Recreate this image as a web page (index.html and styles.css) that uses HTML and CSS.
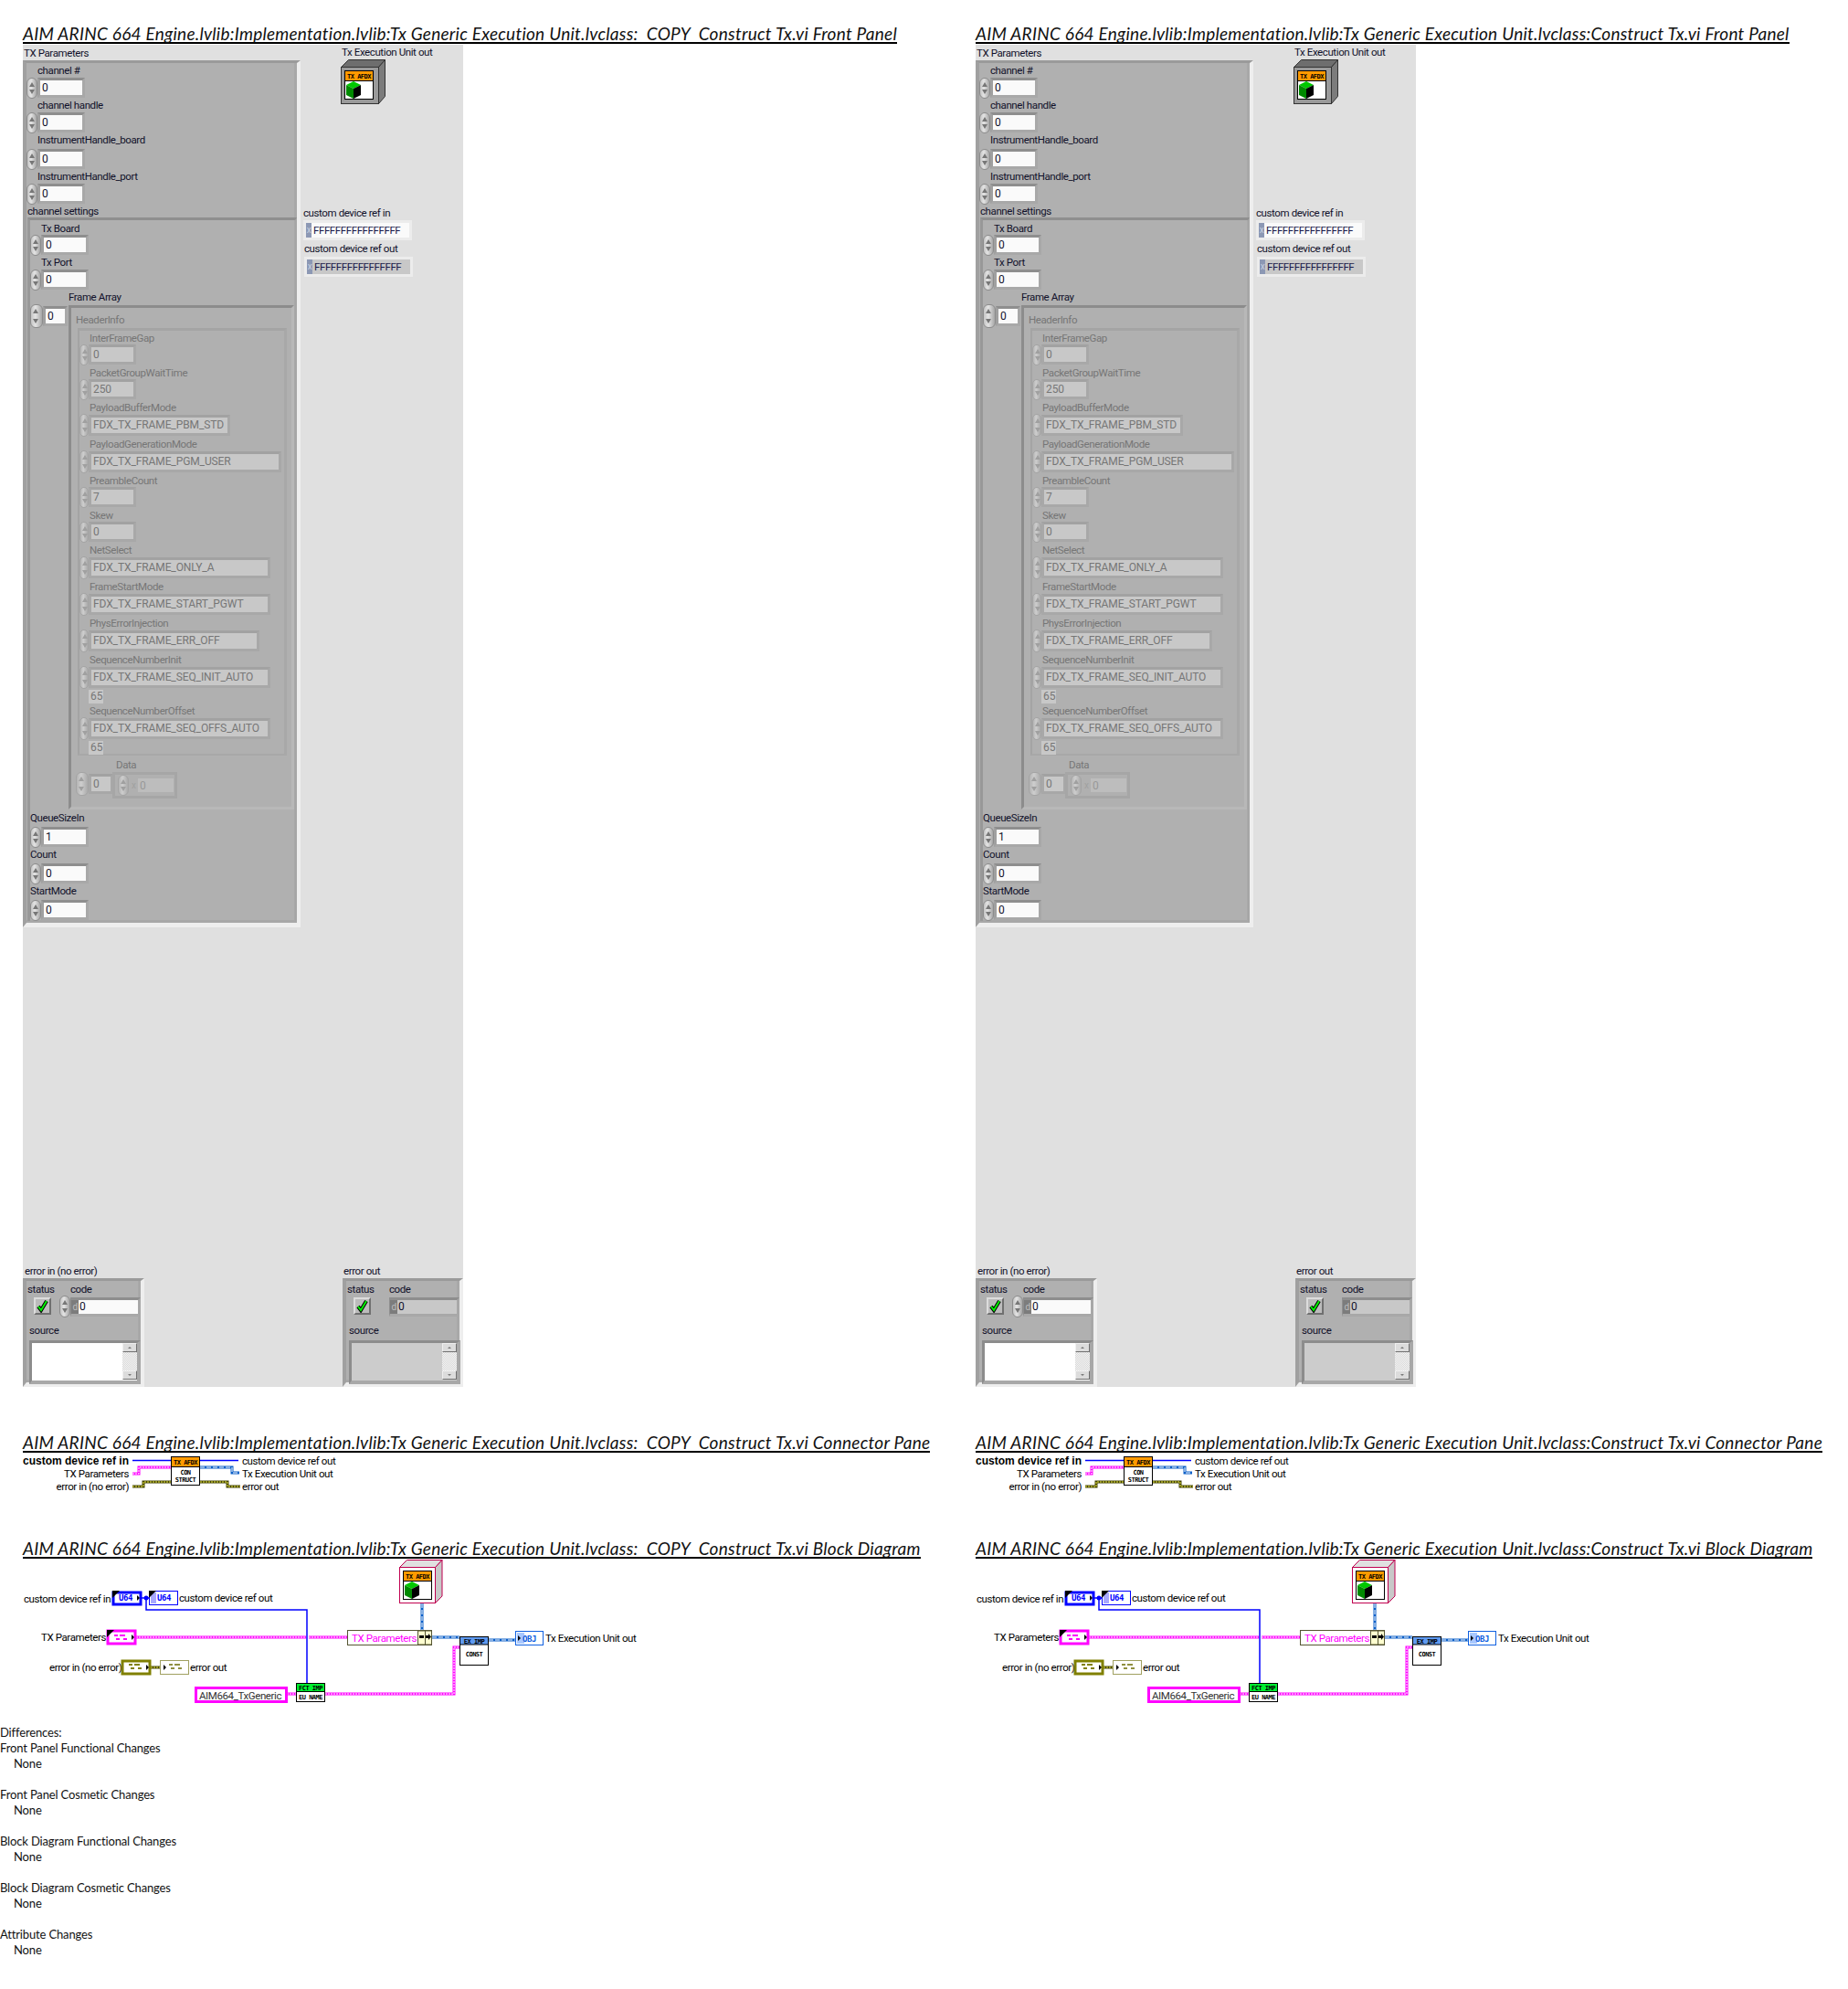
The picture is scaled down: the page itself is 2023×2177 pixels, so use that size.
FILE: index.html
```html
<!DOCTYPE html>
<html lang="en">
<head>
    <meta charset="UTF-8">
    <title>VI Comparison Report</title>
    <link rel="stylesheet" href="styles.css">
</head>
<body>
    <svg class="sprite" width="0" height="0">
        <symbol id="check" viewBox="0 0 13 15"><path d="M2 8 L5 12 L11 2" fill="none" stroke="#000" stroke-width="4"/><path d="M2 8 L5 12 L11 2" fill="none" stroke="#00f000" stroke-width="2"/></symbol>
        <symbol id="cube" viewBox="0 0 20 20"><path d="M10 0 18 4 10 8 2 4Z" fill="#00c800"/><path d="M2 4 10 8 10 19 2 15Z" fill="#008a00"/><path d="M10 8 18 4 18 15 10 19Z" fill="#000"/></symbol>
    </svg>

    <div class="columns">
        <div class="column">
            <h2>AIM ARINC 664 Engine.lvlib:Implementation.lvlib:Tx Generic Execution Unit.lvclass:  COPY  Construct Tx.vi Front Panel</h2>
            <div class="panel">
                <p class="lbl tx-label">TX Parameters</p>
                <div class="cluster tx-cluster">
                    <div class="ctl"><p>channel #</p><div class="num"><i class="spin"></i><span class="val">0</span></div></div>
                    <div class="ctl"><p>channel handle</p><div class="num"><i class="spin"></i><span class="val">0</span></div></div>
                    <div class="ctl"><p class="tall">InstrumentHandle_board</p><div class="num"><i class="spin"></i><span class="val">0</span></div></div>
                    <div class="ctl"><p>InstrumentHandle_port</p><div class="num"><i class="spin"></i><span class="val">0</span></div></div>
                    <p class="lbl settings-label">channel settings</p>
                    <div class="settings">
                        <div class="ctl"><p>Tx Board</p><div class="num"><i class="spin"></i><span class="val">0</span></div></div>
                        <div class="ctl"><p>Tx Port</p><div class="num"><i class="spin"></i><span class="val">0</span></div></div>
                        <p class="lbl array-label">Frame Array</p>
                        <div class="array">
                            <div class="num index"><i class="spin big"></i><span class="val short">0</span></div>
                            <div class="array-frame off">
                                <p class="lbl header-label">HeaderInfo</p>
                                <div class="header-info">
                                    <div class="ctl"><p>InterFrameGap</p><div class="num"><i class="spin"></i><span class="val">0</span></div></div>
                                    <div class="ctl"><p>PacketGroupWaitTime</p><div class="num"><i class="spin"></i><span class="val">250</span></div></div>
                                    <div class="ctl"><p>PayloadBufferMode</p><div class="num enum"><i class="spin"></i><span class="val w150">FDX_TX_FRAME_PBM_STD</span></div></div>
                                    <div class="ctl"><p>PayloadGenerationMode</p><div class="num enum"><i class="spin"></i><span class="val w206">FDX_TX_FRAME_PGM_USER</span></div></div>
                                    <div class="ctl"><p>PreambleCount</p><div class="num"><i class="spin"></i><span class="val">7</span></div></div>
                                    <div class="ctl"><p>Skew</p><div class="num"><i class="spin"></i><span class="val">0</span></div></div>
                                    <div class="ctl"><p>NetSelect</p><div class="num enum"><i class="spin"></i><span class="val w194">FDX_TX_FRAME_ONLY_A</span></div></div>
                                    <div class="ctl"><p>FrameStartMode</p><div class="num enum"><i class="spin"></i><span class="val w194">FDX_TX_FRAME_START_PGWT</span></div></div>
                                    <div class="ctl"><p>PhysErrorInjection</p><div class="num enum"><i class="spin"></i><span class="val w182">FDX_TX_FRAME_ERR_OFF</span></div></div>
                                    <div class="ctl"><p>SequenceNumberInit</p><div class="num enum"><i class="spin"></i><span class="val w194">FDX_TX_FRAME_SEQ_INIT_AUTO</span></div></div>
                                    <span class="small-val">65</span>
                                    <div class="ctl"><p>SequenceNumberOffset</p><div class="num enum"><i class="spin"></i><span class="val w194">FDX_TX_FRAME_SEQ_OFFS_AUTO</span></div></div>
                                    <span class="small-val">65</span>
                                </div>
                                <div class="data-row">
                                    <div class="num data-index"><i class="spin big"></i><span class="val short">0</span></div>
                                    <div class="data">
                                        <p class="lbl">Data</p>
                                        <div class="data-frame"><i class="spin"></i><em>x</em><span class="val data-val">0</span></div>
                                    </div>
                                </div>
                            </div>
                        </div>
                        <div class="ctl flush"><p>QueueSizeIn</p><div class="num"><i class="spin"></i><span class="val">1</span></div></div>
                        <div class="ctl flush"><p>Count</p><div class="num"><i class="spin"></i><span class="val">0</span></div></div>
                        <div class="ctl flush"><p>StartMode</p><div class="num"><i class="spin"></i><span class="val">0</span></div></div>
                    </div>
                </div>

                <p class="lbl unit-label">Tx Execution Unit out</p>
                <svg class="unit-icon" viewBox="373 65 49 49">
                    <path d="M373.5 73.5 381.5 65.5H421.5L414.5 73.5Z" fill="#6e6e6e" stroke="#333"/>
                    <path d="M414.5 73.5 421.5 65.5V105.5L414.5 113.5Z" fill="#7c7c7c" stroke="#333"/>
                    <rect x="373.5" y="73.5" width="41" height="40" fill="#9a9a9a" stroke="#333"/>
                    <rect x="377.5" y="77.5" width="31" height="31" fill="#fff" stroke="#000"/>
                    <rect x="378" y="78" width="30" height="10" fill="#ff9a00"/>
                    <line x1="378" y1="88.5" x2="408" y2="88.5" stroke="#000"/>
                    <text class="tiny" x="393" y="86" text-anchor="middle">TX AFDX</text>
                    <use href="#cube" x="377" y="89" width="20" height="20"/>
                </svg>

                <div class="ref ref-in">
                    <p class="lbl">custom device ref in</p>
                    <div class="ref-frame"><em>x</em><span>FFFFFFFFFFFFFFFF</span></div>
                </div>
                <div class="ref ref-out">
                    <p class="lbl">custom device ref out</p>
                    <div class="ref-frame grey"><em>x</em><span>FFFFFFFFFFFFFFFF</span></div>
                </div>

                <div class="err err-in">
                    <p class="lbl">error in (no error)</p>
                    <div class="cluster err-box">
                        <div class="err-top">
                            <div class="status"><p class="lbl">status</p><div class="check"><svg width="13" height="15"><use href="#check"/></svg></div></div>
                            <i class="spin err-spin"></i>
                            <div class="code"><p class="lbl">code</p><div class="code-frame"><em>d</em><span>0</span></div></div>
                        </div>
                        <p class="lbl source-label">source</p>
                        <div class="source"><div class="scroll"><b></b><b class="down"></b></div></div>
                    </div>
                </div>
                <div class="err err-out">
                    <p class="lbl">error out</p>
                    <div class="cluster err-box">
                        <div class="err-top">
                            <div class="status"><p class="lbl">status</p><div class="check"><svg width="13" height="15"><use href="#check"/></svg></div></div>
                            <div class="code"><p class="lbl">code</p><div class="code-frame grey"><em>d</em><span>0</span></div></div>
                        </div>
                        <p class="lbl source-label">source</p>
                        <div class="source grey"><div class="scroll"><b></b><b class="down"></b></div></div>
                    </div>
                </div>
            </div>

            <h2 class="conn-title">AIM ARINC 664 Engine.lvlib:Implementation.lvlib:Tx Generic Execution Unit.lvclass:  COPY  Construct Tx.vi Connector Pane</h2>
            <svg class="conn" viewBox="25 1590 400 95">
                <text class="bold" x="141" y="1603" text-anchor="end">custom device ref in</text>
                <text x="141" y="1617" text-anchor="end">TX Parameters</text>
                <text x="141" y="1631" text-anchor="end">error in (no error)</text>
                <path class="bl" d="M145 1598.5H187M219 1598.5H261"/>
                <path class="pk" d="M145 1613H152V1606H187"/><path class="pk-in" d="M145 1613H152V1606H187"/>
                <path class="ol" d="M145 1627H157V1622H187M219 1622H249V1627H263"/><path class="ol-in" d="M145 1627H157V1622H187M219 1622H249V1627H263"/>
                <path class="cw" d="M219 1606H254V1612H262"/><path class="cw-in" d="M219 1606H254V1612H262"/>
                <rect x="187.5" y="1594.5" width="31" height="31" fill="#fff" stroke="#000"/>
                <rect x="188" y="1595" width="30" height="10" fill="#ff9a00"/>
                <line x1="188" y1="1605.5" x2="218" y2="1605.5" stroke="#000"/>
                <text class="tiny" x="203" y="1603" text-anchor="middle">TX AFDX</text>
                <text class="tiny" x="203" y="1614" text-anchor="middle">CON</text>
                <text class="tiny" x="203" y="1622" text-anchor="middle">STRUCT</text>
                <text x="265" y="1603">custom device ref out</text>
                <text x="265" y="1617">Tx Execution Unit out</text>
                <text x="265" y="1631">error out</text>
            </svg>

            <h2>AIM ARINC 664 Engine.lvlib:Implementation.lvlib:Tx Generic Execution Unit.lvclass:  COPY  Construct Tx.vi Block Diagram</h2>
            <svg class="diagram" viewBox="25 1706 760 174">
                <text x="26" y="1754">custom device ref in</text>
                <rect x="124" y="1743" width="30" height="13" fill="#fff" stroke="#0000ff" stroke-width="3"/>
                <path d="M123 1741H131L123 1749Z"/>
                <text class="term" x="130" y="1752" fill="#0000ff">U64</text>
                <path d="M150 1746 153 1749 150 1752Z"/>
                <path class="bl" d="M155 1749H163M160 1749V1762H336V1842"/>
                <circle cx="160" cy="1749" r="2.5" fill="#0000ff"/>
                <rect x="163.5" y="1741.5" width="31" height="15" fill="#fff" stroke="#0000ff"/>
                <rect x="165" y="1743" width="6" height="12" fill="#a8a8ff"/>
                <path d="M163 1741H171L163 1749Z"/>
                <text class="term" x="172" y="1752" fill="#0000ff">U64</text>
                <text x="196" y="1753">custom device ref out</text>

                <text x="45" y="1796">TX Parameters</text>
                <path class="pk" d="M149 1792H335M338 1792H380"/><path class="pk-in" d="M149 1792H335M338 1792H380"/>
                <rect x="118" y="1785" width="30" height="14" fill="#fff" stroke="#ff00ff" stroke-width="3"/>
                <path d="M117 1784H125L117 1792Z"/>
                <path d="M125 1789h4v2h-4zM131 1789h6v2h-6zM127 1793h4v2h-4zM135 1793h4v2h-4z" fill="#ff00ff"/>
                <path d="M144 1789 147 1792 144 1795Z"/>

                <text x="54" y="1829">error in (no error)</text>
                <path class="ol" d="M165 1825H175"/><path class="ol-in" d="M165 1825H175"/>
                <rect x="134" y="1818" width="30" height="14" fill="#fff" stroke="#808000" stroke-width="3"/>
                <path d="M141 1821h4v2h-4zM147 1821h6v2h-6zM143 1825h4v2h-4zM151 1825h4v2h-4z" fill="#808000"/>
                <path d="M160 1822 163 1825 160 1828Z"/>
                <rect x="175.5" y="1817.5" width="31" height="15" fill="#fff" stroke="#a0a060"/>
                <path d="M185 1821h4v2h-4zM191 1821h6v2h-6zM187 1825h4v2h-4zM195 1825h4v2h-4z" fill="#909040"/>
                <path d="M179 1822 182 1825 179 1828Z"/>
                <text x="208" y="1829">error out</text>

                <path class="pk" d="M314 1854H324M356 1854H497V1803H503"/><path class="pk-in" d="M314 1854H324M356 1854H497V1803H503"/>
                <rect x="214.5" y="1847.5" width="99" height="15" fill="#fff" stroke="#ff00ff" stroke-width="3"/>
                <text x="218" y="1860" fill="#333">AIM664_TxGeneric</text>
                <rect x="324.5" y="1842.5" width="31" height="20" fill="#fff" stroke="#000"/>
                <rect x="325" y="1843" width="30" height="8" fill="#00f030"/>
                <line x1="325" y1="1851.5" x2="355" y2="1851.5" stroke="#000"/>
                <text class="tiny" x="340" y="1850" text-anchor="middle">FCT IMP</text>
                <text class="tiny" x="340" y="1860" text-anchor="middle">EU NAME</text>

                <path d="M437.5 1715.5 445.5 1707.5H484L476.5 1715.5Z" fill="#e0e0e0" stroke="#c00050"/>
                <path d="M476.5 1715.5 484 1707.5V1747L476.5 1754.5Z" fill="#c8c8c8" stroke="#c00050"/>
                <rect x="437.5" y="1715.5" width="39" height="39" fill="#fff" stroke="#c00050"/>
                <rect x="441.5" y="1719.5" width="31" height="31" fill="#fff" stroke="#000"/>
                <rect x="442" y="1720" width="30" height="10" fill="#ff9a00"/>
                <line x1="442" y1="1730.5" x2="472" y2="1730.5" stroke="#000"/>
                <text class="tiny" x="457" y="1728" text-anchor="middle">TX AFDX</text>
                <use href="#cube" x="441" y="1731" width="20" height="20"/>

                <path class="cw" d="M462 1755V1784M473 1792H503M535 1795H564"/><path class="cw-in" d="M462 1755V1784M473 1792H503M535 1795H564"/>
                <rect x="380.5" y="1784.5" width="92" height="16" fill="#fff" stroke="#555533"/>
                <rect x="457.5" y="1785" width="15" height="15" fill="#ffffd0" stroke="#555533"/>
                <line x1="465.5" y1="1785" x2="465.5" y2="1800" stroke="#555533"/>
                <path d="M459 1790h5v3h-5zM466 1790h3v-2l3 3.500-3 3.500v-2h-3z"/>
                <text x="385" y="1797" class="pink-text">TX Parameters</text>

                <rect x="503.5" y="1791.500" width="31" height="31" fill="#fff" stroke="#000"/>
                <rect x="504" y="1792" width="30" height="8" fill="#5f9af0"/>
                <line x1="504" y1="1800" x2="534" y2="1800" stroke="#000"/>
                <text class="tiny" x="519" y="1799" text-anchor="middle">EX IMP</text>
                <text class="tiny" x="519" y="1813" text-anchor="middle">CONST</text>

                <rect x="564.5" y="1785.500" width="30" height="15" fill="#fff" stroke="#1060e0"/>
                <rect x="566" y="1787" width="8" height="12" fill="#a8c8ff"/>
                <path d="M567 1790 570 1793 567 1796Z"/>
                <text class="term" x="572" y="1797" fill="#1060e0">OBJ</text>
                <text x="597" y="1797">Tx Execution Unit out</text>
            </svg>
        </div>

        <div class="column">
            <h2>AIM ARINC 664 Engine.lvlib:Implementation.lvlib:Tx Generic Execution Unit.lvclass:Construct Tx.vi Front Panel</h2>
            <div class="panel">
                <p class="lbl tx-label">TX Parameters</p>
                <div class="cluster tx-cluster">
                    <div class="ctl"><p>channel #</p><div class="num"><i class="spin"></i><span class="val">0</span></div></div>
                    <div class="ctl"><p>channel handle</p><div class="num"><i class="spin"></i><span class="val">0</span></div></div>
                    <div class="ctl"><p class="tall">InstrumentHandle_board</p><div class="num"><i class="spin"></i><span class="val">0</span></div></div>
                    <div class="ctl"><p>InstrumentHandle_port</p><div class="num"><i class="spin"></i><span class="val">0</span></div></div>
                    <p class="lbl settings-label">channel settings</p>
                    <div class="settings">
                        <div class="ctl"><p>Tx Board</p><div class="num"><i class="spin"></i><span class="val">0</span></div></div>
                        <div class="ctl"><p>Tx Port</p><div class="num"><i class="spin"></i><span class="val">0</span></div></div>
                        <p class="lbl array-label">Frame Array</p>
                        <div class="array">
                            <div class="num index"><i class="spin big"></i><span class="val short">0</span></div>
                            <div class="array-frame off">
                                <p class="lbl header-label">HeaderInfo</p>
                                <div class="header-info">
                                    <div class="ctl"><p>InterFrameGap</p><div class="num"><i class="spin"></i><span class="val">0</span></div></div>
                                    <div class="ctl"><p>PacketGroupWaitTime</p><div class="num"><i class="spin"></i><span class="val">250</span></div></div>
                                    <div class="ctl"><p>PayloadBufferMode</p><div class="num enum"><i class="spin"></i><span class="val w150">FDX_TX_FRAME_PBM_STD</span></div></div>
                                    <div class="ctl"><p>PayloadGenerationMode</p><div class="num enum"><i class="spin"></i><span class="val w206">FDX_TX_FRAME_PGM_USER</span></div></div>
                                    <div class="ctl"><p>PreambleCount</p><div class="num"><i class="spin"></i><span class="val">7</span></div></div>
                                    <div class="ctl"><p>Skew</p><div class="num"><i class="spin"></i><span class="val">0</span></div></div>
                                    <div class="ctl"><p>NetSelect</p><div class="num enum"><i class="spin"></i><span class="val w194">FDX_TX_FRAME_ONLY_A</span></div></div>
                                    <div class="ctl"><p>FrameStartMode</p><div class="num enum"><i class="spin"></i><span class="val w194">FDX_TX_FRAME_START_PGWT</span></div></div>
                                    <div class="ctl"><p>PhysErrorInjection</p><div class="num enum"><i class="spin"></i><span class="val w182">FDX_TX_FRAME_ERR_OFF</span></div></div>
                                    <div class="ctl"><p>SequenceNumberInit</p><div class="num enum"><i class="spin"></i><span class="val w194">FDX_TX_FRAME_SEQ_INIT_AUTO</span></div></div>
                                    <span class="small-val">65</span>
                                    <div class="ctl"><p>SequenceNumberOffset</p><div class="num enum"><i class="spin"></i><span class="val w194">FDX_TX_FRAME_SEQ_OFFS_AUTO</span></div></div>
                                    <span class="small-val">65</span>
                                </div>
                                <div class="data-row">
                                    <div class="num data-index"><i class="spin big"></i><span class="val short">0</span></div>
                                    <div class="data">
                                        <p class="lbl">Data</p>
                                        <div class="data-frame"><i class="spin"></i><em>x</em><span class="val data-val">0</span></div>
                                    </div>
                                </div>
                            </div>
                        </div>
                        <div class="ctl flush"><p>QueueSizeIn</p><div class="num"><i class="spin"></i><span class="val">1</span></div></div>
                        <div class="ctl flush"><p>Count</p><div class="num"><i class="spin"></i><span class="val">0</span></div></div>
                        <div class="ctl flush"><p>StartMode</p><div class="num"><i class="spin"></i><span class="val">0</span></div></div>
                    </div>
                </div>

                <p class="lbl unit-label">Tx Execution Unit out</p>
                <svg class="unit-icon" viewBox="373 65 49 49">
                    <path d="M373.5 73.5 381.5 65.5H421.5L414.5 73.5Z" fill="#6e6e6e" stroke="#333"/>
                    <path d="M414.5 73.5 421.5 65.5V105.5L414.5 113.5Z" fill="#7c7c7c" stroke="#333"/>
                    <rect x="373.5" y="73.5" width="41" height="40" fill="#9a9a9a" stroke="#333"/>
                    <rect x="377.5" y="77.5" width="31" height="31" fill="#fff" stroke="#000"/>
                    <rect x="378" y="78" width="30" height="10" fill="#ff9a00"/>
                    <line x1="378" y1="88.5" x2="408" y2="88.5" stroke="#000"/>
                    <text class="tiny" x="393" y="86" text-anchor="middle">TX AFDX</text>
                    <use href="#cube" x="377" y="89" width="20" height="20"/>
                </svg>

                <div class="ref ref-in">
                    <p class="lbl">custom device ref in</p>
                    <div class="ref-frame"><em>x</em><span>FFFFFFFFFFFFFFFF</span></div>
                </div>
                <div class="ref ref-out">
                    <p class="lbl">custom device ref out</p>
                    <div class="ref-frame grey"><em>x</em><span>FFFFFFFFFFFFFFFF</span></div>
                </div>

                <div class="err err-in">
                    <p class="lbl">error in (no error)</p>
                    <div class="cluster err-box">
                        <div class="err-top">
                            <div class="status"><p class="lbl">status</p><div class="check"><svg width="13" height="15"><use href="#check"/></svg></div></div>
                            <i class="spin err-spin"></i>
                            <div class="code"><p class="lbl">code</p><div class="code-frame"><em>d</em><span>0</span></div></div>
                        </div>
                        <p class="lbl source-label">source</p>
                        <div class="source"><div class="scroll"><b></b><b class="down"></b></div></div>
                    </div>
                </div>
                <div class="err err-out">
                    <p class="lbl">error out</p>
                    <div class="cluster err-box">
                        <div class="err-top">
                            <div class="status"><p class="lbl">status</p><div class="check"><svg width="13" height="15"><use href="#check"/></svg></div></div>
                            <div class="code"><p class="lbl">code</p><div class="code-frame grey"><em>d</em><span>0</span></div></div>
                        </div>
                        <p class="lbl source-label">source</p>
                        <div class="source grey"><div class="scroll"><b></b><b class="down"></b></div></div>
                    </div>
                </div>
            </div>

            <h2 class="conn-title">AIM ARINC 664 Engine.lvlib:Implementation.lvlib:Tx Generic Execution Unit.lvclass:Construct Tx.vi Connector Pane</h2>
            <svg class="conn" viewBox="25 1590 400 95">
                <text class="bold" x="141" y="1603" text-anchor="end">custom device ref in</text>
                <text x="141" y="1617" text-anchor="end">TX Parameters</text>
                <text x="141" y="1631" text-anchor="end">error in (no error)</text>
                <path class="bl" d="M145 1598.5H187M219 1598.5H261"/>
                <path class="pk" d="M145 1613H152V1606H187"/><path class="pk-in" d="M145 1613H152V1606H187"/>
                <path class="ol" d="M145 1627H157V1622H187M219 1622H249V1627H263"/><path class="ol-in" d="M145 1627H157V1622H187M219 1622H249V1627H263"/>
                <path class="cw" d="M219 1606H254V1612H262"/><path class="cw-in" d="M219 1606H254V1612H262"/>
                <rect x="187.5" y="1594.5" width="31" height="31" fill="#fff" stroke="#000"/>
                <rect x="188" y="1595" width="30" height="10" fill="#ff9a00"/>
                <line x1="188" y1="1605.5" x2="218" y2="1605.5" stroke="#000"/>
                <text class="tiny" x="203" y="1603" text-anchor="middle">TX AFDX</text>
                <text class="tiny" x="203" y="1614" text-anchor="middle">CON</text>
                <text class="tiny" x="203" y="1622" text-anchor="middle">STRUCT</text>
                <text x="265" y="1603">custom device ref out</text>
                <text x="265" y="1617">Tx Execution Unit out</text>
                <text x="265" y="1631">error out</text>
            </svg>

            <h2>AIM ARINC 664 Engine.lvlib:Implementation.lvlib:Tx Generic Execution Unit.lvclass:Construct Tx.vi Block Diagram</h2>
            <svg class="diagram" viewBox="25 1706 760 174">
                <text x="26" y="1754">custom device ref in</text>
                <rect x="124" y="1743" width="30" height="13" fill="#fff" stroke="#0000ff" stroke-width="3"/>
                <path d="M123 1741H131L123 1749Z"/>
                <text class="term" x="130" y="1752" fill="#0000ff">U64</text>
                <path d="M150 1746 153 1749 150 1752Z"/>
                <path class="bl" d="M155 1749H163M160 1749V1762H336V1842"/>
                <circle cx="160" cy="1749" r="2.5" fill="#0000ff"/>
                <rect x="163.5" y="1741.5" width="31" height="15" fill="#fff" stroke="#0000ff"/>
                <rect x="165" y="1743" width="6" height="12" fill="#a8a8ff"/>
                <path d="M163 1741H171L163 1749Z"/>
                <text class="term" x="172" y="1752" fill="#0000ff">U64</text>
                <text x="196" y="1753">custom device ref out</text>

                <text x="45" y="1796">TX Parameters</text>
                <path class="pk" d="M149 1792H335M338 1792H380"/><path class="pk-in" d="M149 1792H335M338 1792H380"/>
                <rect x="118" y="1785" width="30" height="14" fill="#fff" stroke="#ff00ff" stroke-width="3"/>
                <path d="M117 1784H125L117 1792Z"/>
                <path d="M125 1789h4v2h-4zM131 1789h6v2h-6zM127 1793h4v2h-4zM135 1793h4v2h-4z" fill="#ff00ff"/>
                <path d="M144 1789 147 1792 144 1795Z"/>

                <text x="54" y="1829">error in (no error)</text>
                <path class="ol" d="M165 1825H175"/><path class="ol-in" d="M165 1825H175"/>
                <rect x="134" y="1818" width="30" height="14" fill="#fff" stroke="#808000" stroke-width="3"/>
                <path d="M141 1821h4v2h-4zM147 1821h6v2h-6zM143 1825h4v2h-4zM151 1825h4v2h-4z" fill="#808000"/>
                <path d="M160 1822 163 1825 160 1828Z"/>
                <rect x="175.5" y="1817.5" width="31" height="15" fill="#fff" stroke="#a0a060"/>
                <path d="M185 1821h4v2h-4zM191 1821h6v2h-6zM187 1825h4v2h-4zM195 1825h4v2h-4z" fill="#909040"/>
                <path d="M179 1822 182 1825 179 1828Z"/>
                <text x="208" y="1829">error out</text>

                <path class="pk" d="M314 1854H324M356 1854H497V1803H503"/><path class="pk-in" d="M314 1854H324M356 1854H497V1803H503"/>
                <rect x="214.5" y="1847.5" width="99" height="15" fill="#fff" stroke="#ff00ff" stroke-width="3"/>
                <text x="218" y="1860" fill="#333">AIM664_TxGeneric</text>
                <rect x="324.5" y="1842.5" width="31" height="20" fill="#fff" stroke="#000"/>
                <rect x="325" y="1843" width="30" height="8" fill="#00f030"/>
                <line x1="325" y1="1851.5" x2="355" y2="1851.5" stroke="#000"/>
                <text class="tiny" x="340" y="1850" text-anchor="middle">FCT IMP</text>
                <text class="tiny" x="340" y="1860" text-anchor="middle">EU NAME</text>

                <path d="M437.5 1715.5 445.5 1707.5H484L476.5 1715.5Z" fill="#e0e0e0" stroke="#c00050"/>
                <path d="M476.5 1715.5 484 1707.5V1747L476.5 1754.5Z" fill="#c8c8c8" stroke="#c00050"/>
                <rect x="437.5" y="1715.5" width="39" height="39" fill="#fff" stroke="#c00050"/>
                <rect x="441.5" y="1719.5" width="31" height="31" fill="#fff" stroke="#000"/>
                <rect x="442" y="1720" width="30" height="10" fill="#ff9a00"/>
                <line x1="442" y1="1730.5" x2="472" y2="1730.5" stroke="#000"/>
                <text class="tiny" x="457" y="1728" text-anchor="middle">TX AFDX</text>
                <use href="#cube" x="441" y="1731" width="20" height="20"/>

                <path class="cw" d="M462 1755V1784M473 1792H503M535 1795H564"/><path class="cw-in" d="M462 1755V1784M473 1792H503M535 1795H564"/>
                <rect x="380.5" y="1784.5" width="92" height="16" fill="#fff" stroke="#555533"/>
                <rect x="457.5" y="1785" width="15" height="15" fill="#ffffd0" stroke="#555533"/>
                <line x1="465.5" y1="1785" x2="465.5" y2="1800" stroke="#555533"/>
                <path d="M459 1790h5v3h-5zM466 1790h3v-2l3 3.500-3 3.500v-2h-3z"/>
                <text x="385" y="1797" class="pink-text">TX Parameters</text>

                <rect x="503.5" y="1791.500" width="31" height="31" fill="#fff" stroke="#000"/>
                <rect x="504" y="1792" width="30" height="8" fill="#5f9af0"/>
                <line x1="504" y1="1800" x2="534" y2="1800" stroke="#000"/>
                <text class="tiny" x="519" y="1799" text-anchor="middle">EX IMP</text>
                <text class="tiny" x="519" y="1813" text-anchor="middle">CONST</text>

                <rect x="564.5" y="1785.500" width="30" height="15" fill="#fff" stroke="#1060e0"/>
                <rect x="566" y="1787" width="8" height="12" fill="#a8c8ff"/>
                <path d="M567 1790 570 1793 567 1796Z"/>
                <text class="term" x="572" y="1797" fill="#1060e0">OBJ</text>
                <text x="597" y="1797">Tx Execution Unit out</text>
            </svg>
        </div>
    </div>

    <div class="differences">
        <p>Differences:</p>
        <p>Front Panel Functional Changes</p>
        <p class="none">None</p>
        <p class="blank"></p>
        <p>Front Panel Cosmetic Changes</p>
        <p class="none">None</p>
        <p class="blank"></p>
        <p>Block Diagram Functional Changes</p>
        <p class="none">None</p>
        <p class="blank"></p>
        <p>Block Diagram Cosmetic Changes</p>
        <p class="none">None</p>
        <p class="blank"></p>
        <p>Attribute Changes</p>
        <p class="none">None</p>
    </div>
</body>
</html>
```
FILE: styles.css
```css
body {
    margin: 0;
    background: #fff;
    font-family: Roboto, "Liberation Sans", sans-serif;
    font-size: 11.5px;
    letter-spacing: -0.4px;
    color: #10102a;
}
p {
    margin: 0;
}
em {
    font-style: normal;
}
.sprite {
    position: absolute;
}
.columns {
    display: flex;
    padding: 27px 0 0 25px;
}
.column {
    flex: none;
    width: 1043px;
}
.column:last-child {
    width: 950px;
}
h2 {
    display: inline-block;
    margin: 0;
    border-bottom: 2px solid #000;
    font: italic 400 19px/19px Lato, "Open Sans", sans-serif;
    letter-spacing: 0.25px;
    color: #111;
    white-space: pre;
    vertical-align: top;
}
h2.conn-title {
    margin-top: 51px;
}

/* front panel */
.panel {
    position: relative;
    width: 482px;
    height: 1469px;
    margin-top: 1px;
    background: #e0e0e0;
}
.lbl {
    height: 16px;
    line-height: 16px;
    white-space: nowrap;
}
.tx-label {
    position: absolute;
    left: 1px;
    top: 1px;
}
.unit-label {
    position: absolute;
    left: 349px;
    top: 0;
}
.unit-icon {
    position: absolute;
    left: 348px;
    top: 16px;
    width: 49px;
    height: 49px;
}
.unit-icon text, .conn text, .diagram text {
    font-family: Roboto, "Liberation Sans", sans-serif;
    font-size: 11.5px;
}
.conn text.tiny, .diagram text.tiny, .unit-icon text.tiny {
    font: bold 7px "DejaVu Sans Mono", monospace;
    letter-spacing: -0.5px;
}
.conn text.bold {
    font: bold 12px "Liberation Sans", sans-serif;
    letter-spacing: 0;
}
.diagram text.term {
    font: bold 9px "DejaVu Sans Mono", monospace;
}
.diagram text.pink-text {
    fill: #ff00ff;
}

/* clusters */
.cluster {
    box-sizing: border-box;
    background: #b0b0b0;
    border-style: solid;
    border-width: 3px 4px 5px 4px;
    border-color: #9a9a9a #eeeeee #eeeeee #a0a0a0;
    box-shadow: inset -3px -3px 0 #a8a8a8;
}
.tx-cluster {
    position: absolute;
    left: 0;
    top: 17px;
    width: 304px;
    height: 949px;
}
.settings-label {
    margin-left: 1px;
    height: 15px;
}
.settings {
    height: 770px;
    margin-left: 1px;
    box-sizing: border-box;
    border-style: solid;
    border-width: 3px 2px 0 3px;
    border-color: #8f8f8f #a6a6a6 #a6a6a6 #989898;
}
.ctl p {
    height: 16px;
    margin-left: 12px;
    line-height: 16px;
    white-space: nowrap;
}
.ctl p.tall {
    height: 18px;
}
.settings > .ctl:first-child p {
    height: 15px;
    margin-top: 1px;
}
.settings .ctl.flush p {
    height: 18px;
    margin-left: 0;
}
.num {
    display: flex;
    align-items: center;
    height: 22px;
}
.spin {
    position: relative;
    flex: none;
    box-sizing: border-box;
    width: 12px;
    height: 23px;
    border: 1px solid #8c8c8c;
    border-radius: 6px;
    background: linear-gradient(90deg, #c4c4c4, #e4e4e4 40%, #a6a6a6);
}
.spin::before, .spin::after {
    content: "";
    position: absolute;
    left: 2px;
    border-left: 3px solid transparent;
    border-right: 3px solid transparent;
}
.spin::before {
    top: 4px;
    border-bottom: 5px solid #777;
}
.spin::after {
    bottom: 4px;
    border-top: 5px solid #777;
}
.spin.big {
    width: 14px;
    height: 26px;
}
.val {
    flex: none;
    box-sizing: content-box;
    width: 44px;
    height: 16px;
    padding-left: 2px;
    border-style: solid;
    border-width: 3px;
    border-color: #8e8e8e #a8a8a8 #a8a8a8 #a0a0a0;
    background: #fafafa;
    font-size: 12px;
    letter-spacing: -0.1px;
    line-height: 16px;
    overflow: hidden;
    white-space: nowrap;
}
.val.short {
    width: 19px;
}
.array-label {
    margin-left: 42px;
}
.array {
    display: flex;
    align-items: flex-start;
    height: 554px;
}
.index {
    width: 42px;
    height: 26px;
    flex: none;
}
.array-frame {
    box-sizing: border-box;
    width: 247px;
    height: 552px;
    margin-top: 1px;
    padding: 3px 0 0 5px;
    border-style: solid;
    border-width: 3px;
    border-color: #8c8c8c #b8b8b8 #b8b8b8 #8c8c8c;
}
.off, .off .ctl p {
    color: #767676;
}
.off .ctl p {
    line-height: 18px;
}
.off .val, .off .small-val {
    background: #c8c8c8;
    color: #767676;
    border-color: #a2a2a2 #a8a8a8 #a8a8a8 #a8a8a8;
}
.off .spin {
    background: linear-gradient(90deg, #b4b4b4, #cecece 40%, #aaaaaa);
    border-color: #a4a4a4;
}
.off .spin::before {
    border-bottom-color: #a0a0a0;
}
.off .spin::after {
    border-top-color: #a0a0a0;
}
.header-label {
    padding-top: 2px;
    margin-bottom: 1px;
}
.header-info {
    box-sizing: border-box;
    width: 229px;
    height: 468px;
    margin-left: 2px;
    border-style: solid;
    border-width: 3px 3px 2px 2px;
    border-color: #a4a4a4 #a8a8a8 #a8a8a8 #a4a4a4;
}
.header-info .spin {
    width: 10px;
    height: 23px;
}
.header-info .ctl p {
    margin-left: 11px;
}
.header-info .ctl:first-child p {
    margin-top: -1px;
}
.enum {
    height: 24px;
}
.enum .val {
    height: 17px;
    border-width: 3.5px 3px;
}
.header-info .enum .spin {
    height: 25px;
}
.w150 { width: 147px; }
.w206 { width: 203px; }
.w194 { width: 191px; }
.w182 { width: 179px; }
.small-val {
    display: block;
    width: 16px;
    height: 15px;
    margin: 2px 0 -1px 10px;
    padding-left: 2px;
    box-sizing: border-box;
    font-size: 12px;
    letter-spacing: -0.1px;
    line-height: 15px;
}
.data-row {
    display: flex;
    padding-top: 4px;
}
.data-index {
    height: 26px;
    margin-top: 14px;
    width: 40px;
    flex: none;
}
.data .lbl {
    margin: -2px 0 0 2px;
    text-indent: 2px;
}
.data-frame {
    display: flex;
    align-items: center;
    width: 71px;
    height: 29px;
    box-sizing: border-box;
    padding-left: 3px;
    border: 3px solid #a6a6a6;
    color: #a0a0a0;
}
.data-frame em {
    width: 7px;
    margin-left: 3px;
    font-size: 10px;
}
.off .data-val {
    width: 37px;
    height: 15px;
    border: 0;
    background: #bdbdbd;
    color: #989898;
}

/* refnum controls */
.ref {
    position: absolute;
}
.ref-in {
    left: 307px;
    top: 176px;
}
.ref-out {
    left: 308px;
    top: 215px;
}
.ref-out .lbl {
    height: 17px;
}
.ref-frame {
    display: flex;
    box-sizing: border-box;
    width: 119px;
    height: 22px;
    border: 3px solid #ececec;
    background: #fafafa;
    line-height: 16px;
    color: #1a1a4a;
}
.ref-frame em {
    width: 6px;
    margin-right: 2px;
    background: #8c98b4;
    color: #c8d0e0;
    font-size: 10px;
    text-align: center;
}
.ref-frame.grey {
    background: #c8c8c8;
}

/* error clusters */
.err {
    position: absolute;
    top: 1334px;
}
.err-in {
    left: 2px;
}
.err-in .err-box {
    margin-left: -2px;
    width: 133px;
}
.err-out {
    left: 350px;
}
.err-out > .lbl {
    margin-left: 1px;
}
.err-box {
    width: 132px;
    height: 119px;
    padding: 1px 0 0 3px;
}
.err-top {
    display: flex;
    align-items: flex-start;
    height: 42px;
}
.status {
    width: 33px;
}
.status .lbl {
    margin-left: -2px;
}
.check {
    display: flex;
    align-items: center;
    justify-content: center;
    box-sizing: border-box;
    width: 19px;
    height: 19px;
    margin: 1px 0 0 5px;
    border: 2px solid;
    border-color: #dcdcdc #707070 #707070 #dcdcdc;
    background: #bcbcbc;
}
.err-spin {
    margin-top: 15px;
    height: 24px;
}
.err-out .status {
    width: 45px;
}
.code-frame {
    display: flex;
    box-sizing: border-box;
    width: 77px;
    height: 21px;
    margin-top: 1px;
    border: 3px solid;
    border-color: #8e8e8e #a8a8a8 #a8a8a8 #8e8e8e;
    border-left-width: 1px;
    background: #fafafa;
    font-size: 12px;
    line-height: 15px;
}
.code-frame.grey {
    background: #c8c8c8;
}
.code-frame em {
    width: 8px;
    margin-right: 1px;
    background: #7c7c7c;
    color: #bdbdbd;
    text-align: center;
    font-size: 10px;
}
.source-label {
    height: 15px;
    margin: 3px 0 4px;
}
.source {
    display: flex;
    justify-content: flex-end;
    box-sizing: border-box;
    width: 122px;
    height: 48px;
    border-style: solid;
    border-width: 3px 4px 4px 3px;
    border-color: #8c8c8c #a8a8a8 #a8a8a8 #8c8c8c;
    background: #fff;
}
.source.grey {
    background: #cccccc;
}
.scroll {
    display: flex;
    flex-direction: column;
    justify-content: space-between;
    width: 16px;
    height: 40px;
    background: repeating-conic-gradient(#d8d8d8 0 25%, #f4f4f4 0 50%) 0 0 / 2px 2px;
}
.scroll b {
    display: flex;
    align-items: center;
    justify-content: center;
    height: 10px;
    box-sizing: border-box;
    border: 1px solid;
    border-color: #f0f0f0 #707070 #707070 #f0f0f0;
    background: #dcdcdc;
}
.scroll b::before {
    content: "";
    border-left: 2px solid transparent;
    border-right: 2px solid transparent;
    border-bottom: 2px solid #777;
}
.scroll b.down::before {
    border-bottom: 0;
    border-top: 2px solid #777;
}

/* diagrams */
.conn {
    display: block;
    width: 400px;
    height: 95px;
}
.diagram {
    display: block;
    width: 760px;
    height: 174px;
}
.bl {
    fill: none;
    stroke: #0000ff;
    stroke-width: 1.5;
}
.pk, .pk-in, .ol, .ol-in, .cw, .cw-in {
    fill: none;
}
.pk {
    stroke: #ff00ff;
    stroke-width: 3;
}
.pk-in {
    stroke: #fff;
    stroke-width: 1;
    stroke-dasharray: 2 1;
}
.ol {
    stroke: #404000;
    stroke-width: 3;
}
.ol-in {
    stroke: #f0f040;
    stroke-width: 1;
    stroke-dasharray: 2 1;
}
.cw {
    stroke: #0a5fc8;
    stroke-width: 3;
}
.cw-in {
    stroke: #fff;
    stroke-width: 1;
    stroke-dasharray: 5 2;
}

/* differences text */
.differences {
    padding: 8px 0 33px 0;
    font: 13px/17px Lato, "Open Sans", sans-serif;
    letter-spacing: -0.15px;
    color: #111;
}
.differences .none {
    padding-left: 15px;
}
.differences .blank {
    height: 17px;
}
```
